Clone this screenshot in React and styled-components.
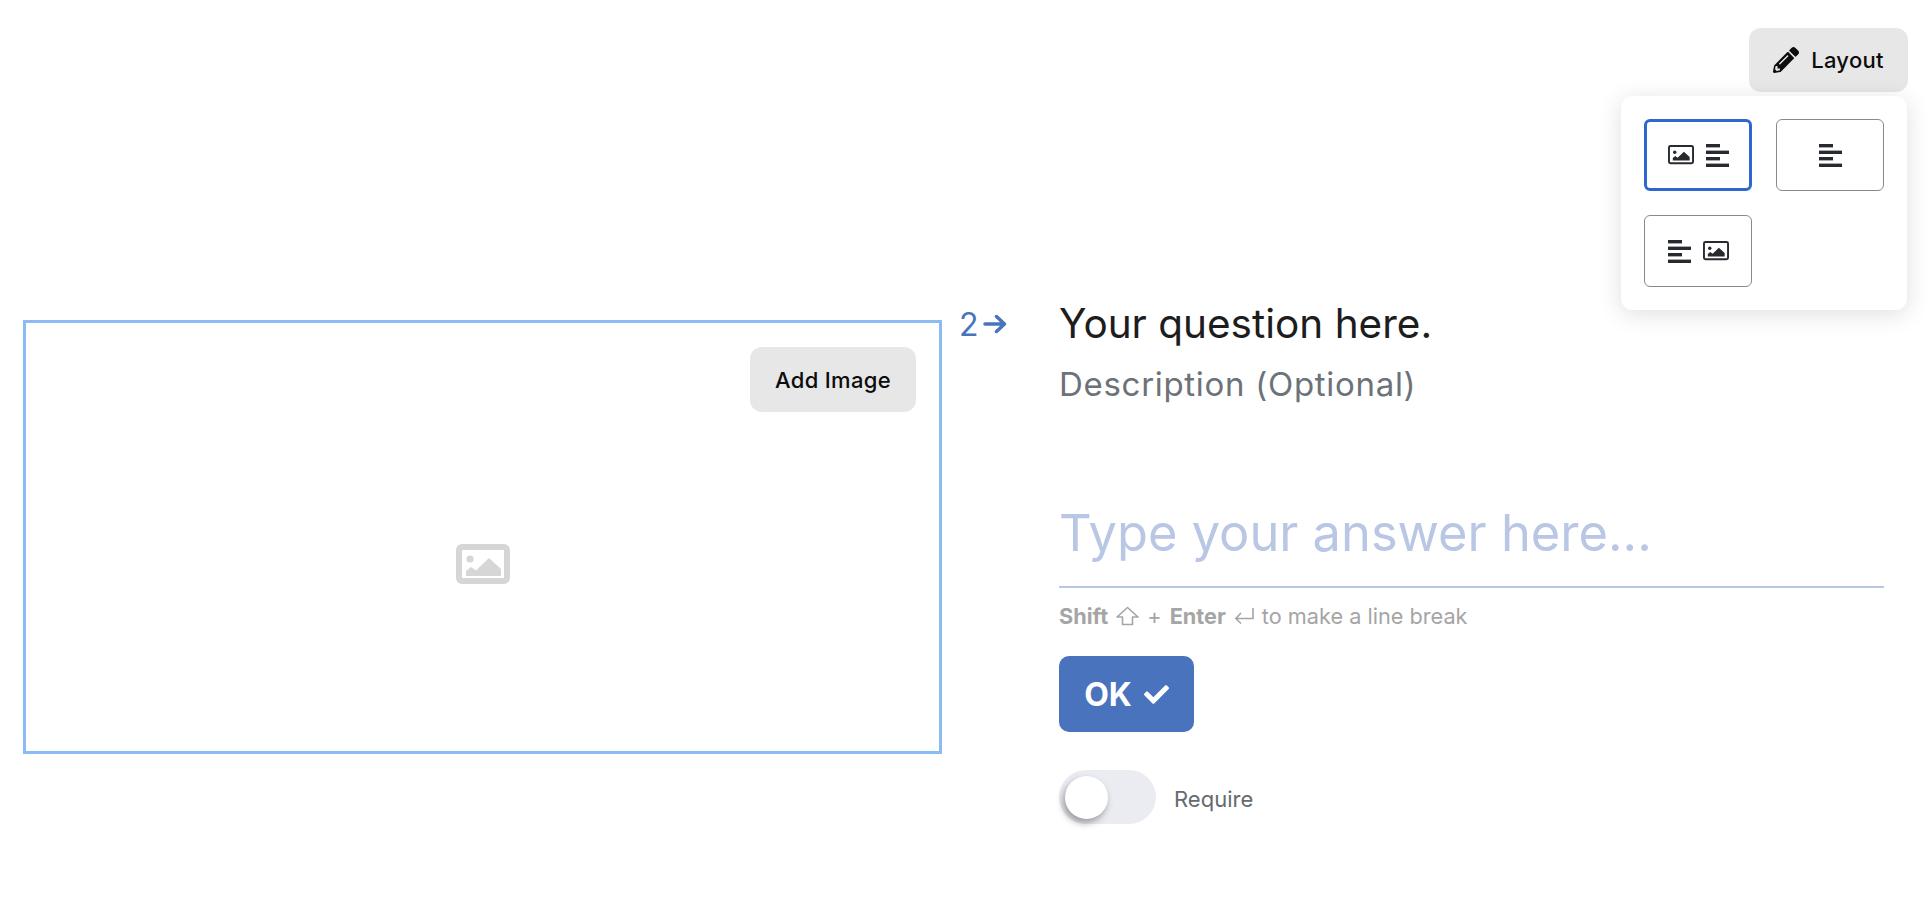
import React from "react";
import styled, { createGlobalStyle } from "styled-components";
import { FaPencilAlt, FaCheck } from "react-icons/fa";

const Global = createGlobalStyle`
  html, body { margin: 0; padding: 0; background: #fff; }
  body { font-family: "Inter", "Liberation Sans", sans-serif; height: 912px; overflow: hidden; }
`;

const Page = styled.div`
  width: 1930px;
  height: 912px;
  display: flex;
  flex-direction: column;
`;
const TopBar = styled.header`
  display: flex;
  justify-content: flex-end;
  padding: 28px 22px 0 0;
  position: relative;
`;
const GreyButton = styled.button`
  border: 0;
  background: #e7e7e7;
  color: #0c0c0c;
  border-radius: 12px;
  font: 500 22px "Inter", "Liberation Sans", sans-serif;
  letter-spacing: 0.3px;
  display: flex;
  align-items: center;
  justify-content: center;
  gap: 12px;
  padding: 0;
  width: ${(p) => p.$w}px;
  height: ${(p) => p.$h}px;
`;
const Popover = styled.div`
  position: absolute;
  top: 96px;
  right: 23px;
  width: 286px;
  height: 214px;
  box-sizing: border-box;
  background: #fff;
  border-radius: 12px;
  box-shadow: 0 4px 24px rgba(0, 0, 0, 0.13);
  padding: 23px;
  display: grid;
  grid-template-columns: 108px 108px;
  grid-auto-rows: 72px;
  column-gap: 24px;
  row-gap: 24px;
  z-index: 2;
`;
const LayoutOption = styled.div`
  box-sizing: border-box;
  border-radius: 6px;
  border: ${(p) => (p.$active ? "3px solid #2f66d0" : "1px solid #8a8a8a")};
  display: flex;
  align-items: center;
  justify-content: center;
  gap: 12px;
`;
const Main = styled.main`
  display: flex;
  align-items: flex-start;
  padding: 0 0 0 23px;
  margin-top: 228px;
`;
const ImageFrame = styled.section`
  box-sizing: border-box;
  width: 919px;
  height: 434px;
  border: 3px solid #8abbf3;
  padding-top: 54px;
  position: relative;
  display: flex;
  align-items: center;
  justify-content: center;
  flex: none;
`;
const AddImage = styled(GreyButton)`
  position: absolute;
  top: 24px;
  right: 23px;
`;
const Body = styled.section`
  display: flex;
  align-items: flex-start;
  margin-left: 17px;
  margin-top: -20px;
`;
const Number = styled.div`
  width: 100px;
  flex: none;
  display: flex;
  align-items: center;
  gap: 4px;
  height: 48px;
  color: #4a73bd;
  font-size: 32px;
`;
const Form = styled.div`
  width: 825px;
  display: flex;
  flex-direction: column;
  align-items: flex-start;
`;
const Title = styled.h1`
  margin: 0;
  font: 400 40.5px/48px "Inter", sans-serif;
  color: #1d1d1d;
`;
const Description = styled.p`
  margin: 12px 0 0;
  font: 400 33px/48px "Inter", sans-serif;
  letter-spacing: 0.7px;
  color: #6c7278;
`;
const AnswerRow = styled.div`
  width: 100%;
  margin-top: 91px;
  padding-bottom: 19px;
  border-bottom: 2px solid #b9c7e4;
  font: 400 50.6px/68px "Inter", sans-serif;
  color: #b9c7e4;
`;
const Hint = styled.div`
  margin-top: 14px;
  display: flex;
  align-items: center;
  font: 400 21.7px/28px "Inter", sans-serif;
  color: #a5a5a5;
  gap: 8px;
`;
const Key = styled.b`
  font-weight: 700;
`;
const OkButton = styled.button`
  margin-top: 26px;
  width: 135px;
  height: 76px;
  border: 0;
  border-radius: 10px;
  background: #4a73bd;
  color: #fff;
  font: 700 32px "Inter", sans-serif;
  display: flex;
  align-items: center;
  justify-content: center;
  gap: 12px;
  padding: 0;
`;
const RequireRow = styled.label`
  margin-top: 38px;
  display: flex;
  align-items: center;
  gap: 18px;
  font: 400 22px/58px "Inter", sans-serif;
  color: #656a70;
`;
const Track = styled.span`
  box-sizing: border-box;
  width: 97px;
  height: 54px;
  margin-top: -4px;
  border-radius: 27px;
  background: #ebecf2;
  padding: 6px;
  display: flex;
`;
const Knob = styled.span`
  width: 43px;
  height: 43px;
  border-radius: 50%;
  background: #fff;
  box-shadow: -2px 4px 7px rgba(0, 0, 0, 0.35);
`;

const Picture = ({ w, color = "#272b30", stroke = 2 }) => (
  <svg width={w} viewBox="0 0 27 20" fill="none" style={{ display: "block" }}>
    <rect x={stroke / 2} y={stroke / 2} width={27 - stroke} height={20 - stroke} rx="1.5" stroke={color} strokeWidth={stroke} />
    <circle cx="7" cy="7.500" r="1.800" fill={color} />
    <path d="M5 16v-2.500l2.500-2 2.500 1.800L16.500 7l6 5.500V16z" fill={color} />
  </svg>
);
const Lines = () => (
  <svg width="23" height="23" viewBox="0 0 23 23" style={{ display: "block" }}>
    <g fill="#272b30">
      <rect x="0" y="0" width="14" height="3.4" />
      <rect x="0" y="6.6" width="23" height="3.4" />
      <rect x="0" y="13" width="14" height="3.4" />
      <rect x="0" y="19.6" width="23" height="3.4" />
    </g>
  </svg>
);
const ArrowGlyph = () => (
  <svg width="24" height="20" viewBox="0 0 24 20" fill="none" stroke="#4a73bd" strokeWidth="3.500" strokeLinecap="round" strokeLinejoin="round">
    <path d="M2 10h19M13.500 2.500 21.500 10l-8 7.500" />
  </svg>
);
const ShiftGlyph = () => (
  <svg width="23" height="20" viewBox="0 0 23 20" fill="none" stroke="#a5a5a5" strokeWidth="1.6" strokeLinejoin="round">
    <path d="M11.500 1.500 22 11h-5.500v7.500h-10V11H1z" />
  </svg>
);
const EnterGlyph = () => (
  <svg width="20" height="18" viewBox="0 0 20 18" fill="none" stroke="#a5a5a5" strokeWidth="1.6">
    <path d="M19 1v10.500H2M7 6 1.800 11.500 7 16.500" />
  </svg>
);

export default function App() {
  return (
    <Page>
      <Global />
      <TopBar>
        <GreyButton $w={159} $h={64}>
          <FaPencilAlt size={26} />
          Layout
        </GreyButton>
        <Popover>
          <LayoutOption $active>
            <Picture w={26} />
            <Lines />
          </LayoutOption>
          <LayoutOption>
            <Lines />
          </LayoutOption>
          <LayoutOption>
            <Lines />
            <Picture w={26} />
          </LayoutOption>
        </Popover>
      </TopBar>
      <Main>
        <ImageFrame>
          <AddImage $w={166} $h={65}>Add Image</AddImage>
          <Picture w={54} color="#d6d6d6" stroke={3} />
        </ImageFrame>
        <Body>
          <Number>
            2
            <ArrowGlyph />
          </Number>
          <Form>
            <Title>Your question here.</Title>
            <Description>Description (Optional)</Description>
            <AnswerRow>Type your answer here...</AnswerRow>
            <Hint>
              <Key>Shift</Key>
              <ShiftGlyph />
              <span>+</span>
              <Key>Enter</Key>
              <EnterGlyph />
              <span>to make a line break</span>
            </Hint>
            <OkButton>
              OK
              <FaCheck size={25} />
            </OkButton>
            <RequireRow>
              <Track>
                <Knob />
              </Track>
              Require
            </RequireRow>
          </Form>
        </Body>
      </Main>
    </Page>
  );
}
